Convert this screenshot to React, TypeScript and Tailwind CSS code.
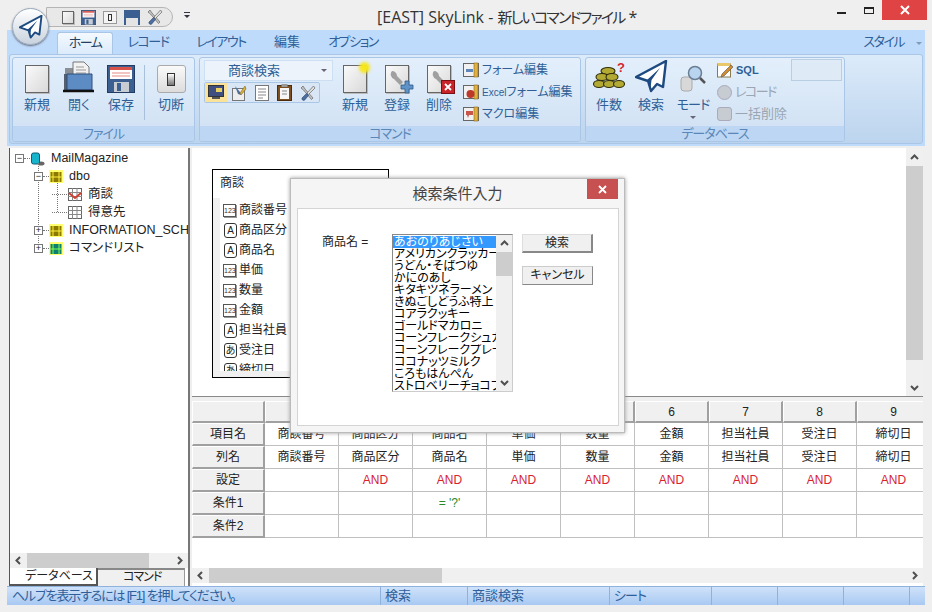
import React from "react";

const jp = '"Liberation Sans", "Noto Sans CJK JP", sans-serif';

function Plane({ size, sw = 2.4 }: { size: number; sw?: number }) {
  return (
    <svg width={size} height={size} viewBox="0 0 33 33">
      <path d="M31 1 L1 17 L13 21 L16 31 L22 24 L28 27 Z" fill="#fff" stroke="#1d4a80" strokeWidth={sw} strokeLinejoin="round" />
      <path d="M25 8 L12 20 L15.5 28 L16.5 20 Z" fill="#1d4a80" />
    </svg>
  );
}

function Chevron({ dir }: { dir: "up" | "down" | "left" | "right" }) {
  const d = {
    up: "M1 6 L4.500 2.500 L8 6",
    down: "M1 3 L4.500 6.500 L8 3",
    left: "M6 1 L2.500 4.500 L6 8",
    right: "M3 1 L6.500 4.500 L3 8",
  }[dir];
  return (
    <svg width="9" height="9" viewBox="0 0 9 9" className="shrink-0">
      <path d={d} fill="none" stroke="#505050" strokeWidth="2" />
    </svg>
  );
}

function BlankDoc({ w = 24, h = 28 }: { w?: number; h?: number }) {
  return (
    <div
      className="border border-[#666] bg-gradient-to-br from-[#fafafa] to-[#d9d9d9] shadow-[1px_1px_0_#bbb] shrink-0"
      style={{ width: w, height: h }}
    />
  );
}

function Floppy({ size = 28 }: { size?: number }) {
  return (
    <svg width={size} height={size} viewBox="0 0 28 28">
      <rect x="0.500" y="0.500" width="27" height="27" fill="#3c5f92" stroke="#243c63" />
      <rect x="3" y="2" width="22" height="12" fill="#fff" />
      <rect x="3" y="2" width="22" height="3" fill="#d9534a" />
      <path d="M5 8h18M5 11h18" stroke="#e28b85" />
      <rect x="7" y="17" width="15" height="10" fill="#c8cdd4" />
      <rect x="10" y="18" width="4" height="8" fill="#3c5f92" />
    </svg>
  );
}

function OpenFolder() {
  return (
    <svg width="32" height="32" viewBox="0 0 32 32">
      <path d="M2 7h10V3h10l4 4v10H2z" fill="#8a8f96" />
      <path d="M10 1h11l5 5v12H10z" fill="#f2f2f2" stroke="#777" />
      <path d="M13 6h8M13 9h10M13 12h10" stroke="#999" />
      <path d="M1 13h3v16h-3z" fill="#55606e" />
      <path d="M4 13h25v16H4z" fill="#5d8cc4" stroke="#2d4f7c" />
      <path d="M0 30h31" stroke="#111" strokeWidth="2.400" />
    </svg>
  );
}

function Switch({ size = 29 }: { size?: number }) {
  return (
    <div className="rounded-[3px] border border-[#aaa] bg-gradient-to-b from-[#fafafa] to-[#dcdcdc] flex items-center justify-center shrink-0" style={{ width: size, height: size - 1 }}>
      <div className="w-[8px] h-[13px] border border-[#333] bg-gradient-to-b from-[#fff] to-[#777]" />
    </div>
  );
}

function Tools({ size = 16 }: { size?: number }) {
  return (
    <svg width={size} height={size} viewBox="0 0 16 16">
      <path d="M3 1l2 3 8 9-1.500 1.500L3.500 5 1 3z" fill="#c4c4c4" stroke="#666" strokeWidth="0.700" />
      <path d="M13.500 1L7 8l1.500 1.500L15 3z" fill="#ddd" stroke="#666" strokeWidth="0.700" />
      <path d="M6.500 8.500L2 13a1.800 1.800 0 0 0 2.500 2.200l4-4.700z" fill="#4c6f9f" stroke="#2c4568" strokeWidth="0.600" />
    </svg>
  );
}

function Coins() {
  return (
    <svg width="32" height="29" viewBox="0 0 32 29" className="mb-[2px]">
      <g fill="#b3aa34" stroke="#2f2c0a" strokeWidth="1.100">
        <ellipse cx="15" cy="9" rx="7" ry="3.500" />
        <ellipse cx="9" cy="15" rx="6" ry="3.500" />
        <ellipse cx="19" cy="15" rx="6" ry="3.500" />
        <ellipse cx="6" cy="22" rx="5.500" ry="3.500" />
        <ellipse cx="16" cy="22" rx="5.500" ry="3.500" />
        <ellipse cx="26" cy="22" rx="5.500" ry="3.500" />
      </g>
      <text x="24" y="10" fontSize="13" fontWeight="700" fill="#d7262c" fontFamily="Liberation Sans">?</text>
    </svg>
  );
}

function SmallSheet({ tone }: { tone: "blue" | "red" | "photo" }) {
  return (
    <svg width="16" height="16" viewBox="0 0 16 16" className="shrink-0">
      <rect x="0.500" y="1.500" width="15" height="13" fill="#f1f1f1" stroke="#666" />
      <rect x="11" y="1" width="4" height="14" fill="#e0b040" stroke="#8a6a1c" strokeWidth="0.600" />
      {tone === "blue" && <rect x="3" y="7" width="7" height="3" fill="#5d86bb" />}
      {tone === "red" && <circle cx="7.500" cy="10" r="4" fill="#bd3a2a" />}
      {tone === "photo" && <path d="M3 5h7v4H6l-1 3-1-3H3z" fill="#c9564a" />}
    </svg>
  );
}

function WrenchDoc({ badge }: { badge: "add" | "del" }) {
  return (
    <div className="relative">
      <BlankDoc />
      <svg width="16" height="16" viewBox="0 0 16 16" className="absolute left-[4px] top-[5px]">
        <path d="M3 1a5 5 0 0 0 2 8l6 6 3-3-6-6a5 5 0 0 0-5-5z" fill="#a0a0a0" />
      </svg>
      {badge === "add" ? (
        <svg width="14" height="14" viewBox="0 0 14 14" className="absolute -right-[5px] -bottom-[1px]">
          <path d="M5 1h4v4h4v4H9v4H5V9H1V5h4z" fill="#5f92c6" stroke="#2d5a8c" strokeWidth="0.800" />
        </svg>
      ) : (
        <div className="absolute -right-[4px] -bottom-[1px] w-[14px] h-[14px] bg-[#c9232a] border border-[#7a1015] flex items-center justify-center">
          <svg width="8" height="8" viewBox="0 0 8 8"><path d="M1 1l6 6M7 1L1 7" stroke="#fff" strokeWidth="1.800" /></svg>
        </div>
      )}
    </div>
  );
}

function RibbonBtn({ label, icon, w, ml = 0 }: { label: string; icon: React.ReactNode; w: number; ml?: number }) {
  return (
    <div className="flex flex-col items-center shrink-0" style={{ width: w, marginLeft: ml }}>
      <div className="h-[35px] flex items-end justify-center">{icon}</div>
      <div className="mt-[4px] text-[13px] leading-[16px] text-[#2f5f96] whitespace-nowrap">{label}</div>
    </div>
  );
}

function Group({ title, width, ml, children }: { title: string; width: number; ml: number; children: React.ReactNode }) {
  return (
    <div className="shrink-0 h-[85px] rounded-[3px] border border-[#a9c6e6] flex flex-col overflow-hidden bg-gradient-to-b from-[#e3effb] to-[#cfe0f3]" style={{ width, marginLeft: ml }}>
      <div className="h-[68px] relative flex">{children}</div>
      <div className="flex-1 bg-[#bcd6f3] text-center text-[13px] leading-[15px] tracking-[-1px] text-[#5b87b8]">{title}</div>
    </div>
  );
}

const tree = [
  { text: "MailMagazine", indent: 0, box: "-", icon: "db" },
  { text: "dbo", indent: 19, box: "-", icon: "schema" },
  { text: "商談", indent: 38, box: "", icon: "view" },
  { text: "得意先", indent: 38, box: "", icon: "table" },
  { text: "INFORMATION_SCHEMA", indent: 19, box: "+", icon: "schema" },
  { text: "コマンドリスト", indent: 19, box: "+", icon: "green" },
];

function TreeIcon({ kind }: { kind: string }) {
  if (kind === "db") {
    return (
      <svg width="15" height="15" viewBox="0 0 15 15" className="shrink-0">
        <ellipse cx="11" cy="12.500" rx="3.500" ry="2" fill="#666" />
        <rect x="1.500" y="2" width="8" height="11" rx="2" fill="#18b4cc" stroke="#0b5f76" />
      </svg>
    );
  }
  if (kind === "view" || kind === "table") {
    return (
      <svg width="14" height="13" viewBox="0 0 14 13" className="shrink-0">
        <rect x="0.500" y="0.500" width="13" height="12" fill="#fff" stroke="#666" />
        <path d="M0 4.500h14M0 8.500h14M4.500 0v13M9 0v13" stroke="#888" />
        {kind === "view" && <path d="M1 5l6 5 6-5" fill="none" stroke="#d04030" strokeWidth="2" />}
      </svg>
    );
  }
  const bg = kind === "green" ? "#0f7f6f" : "#8c7a00";
  return (
    <svg width="14" height="13" viewBox="0 0 14 13" className="shrink-0">
      <rect x="0" y="0" width="14" height="13" fill="#ffff70" />
      <rect x="1.500" y="2" width="11" height="10" fill={bg} />
      <path d="M4 2v10M10 2v10M1.500 7h11" stroke={kind === "green" ? "#7fff50" : "#fff040"} />
    </svg>
  );
}

function FieldIcon({ kind }: { kind: string }) {
  if (kind === "123") {
    return (
      <div className="w-[13px] h-[13px] mr-[2px] border border-[#555] bg-white text-[7px] leading-[11px] text-center text-[#333] shadow-[1px_1px_0_#999] shrink-0">
        123
      </div>
    );
  }
  return (
    <div className="w-[13px] h-[15px] mx-[1px] rounded-[3px] border border-[#333] bg-white text-[10px] leading-[13px] text-center text-[#222] shrink-0">
      {kind}
    </div>
  );
}

const fields = [
  ["123", "商談番号"], ["A", "商品区分"], ["A", "商品名"], ["123", "単価"], ["123", "数量"],
  ["123", "金額"], ["A", "担当社員"], ["あ", "受注日"], ["あ", "締切日"],
];

const columns = ["商談番号", "商品区分", "商品名", "単価", "数量", "金額", "担当社員", "受注日", "締切日"];

const products = [
  "あおのりあじさい", "アメリカンクラッカー", "うどん・そばつゆ", "かにのあし", "キタキツネラーメン", "きぬごしどうふ特上",
  "コアラクッキー", "ゴールドマカロニ", "コーンフレークシュガー", "コーンフレークプレーン", "ココナッツミルク", "ころもはんぺん", "ストロベリーチョコブ",
];

function HeadCell({ children }: { children?: React.ReactNode }) {
  return (
    <div className="bg-[#f0f0f0] border-r-2 border-b-2 border-[#a0a0a0] border-t border-l border-t-white border-l-white flex items-center justify-center text-[12px] text-[#222]">
      {children}
    </div>
  );
}

function Cell({ children, color = "text-[#222]" }: { children?: React.ReactNode; color?: string }) {
  return <div className={`border-r border-b border-[#c0c0c0] flex items-center justify-center text-[12px] ${color}`}>{children}</div>;
}

function ScrollH({ thumbW }: { thumbW: number }) {
  return (
    <div className="h-[15px] flex items-center bg-[#f0f0f0] shrink-0">
      <div className="w-[17px] flex justify-center"><Chevron dir="left" /></div>
      <div className="h-full bg-[#cdcdcd]" style={{ width: thumbW }} />
      <div className="ml-auto w-[17px] flex justify-center"><Chevron dir="right" /></div>
    </div>
  );
}

export default function App() {
  return (
    <div className='relative w-[932px] h-[612px] overflow-hidden bg-[#efefef] flex flex-col [font-feature-settings:"palt"]' style={{ fontFamily: jp }}>
      {/* title bar */}
      <div className="h-[30px] shrink-0 flex items-start relative">
        <div className="absolute left-[377px] top-[7px] text-[16px] leading-[20px] text-[#333] whitespace-nowrap" style={{ fontFamily: '"Open Sans", "Noto Sans CJK JP", sans-serif' }}>
          [EAST] SkyLink - <span className="text-[15px] tracking-[-1.8px]">新しいコマンドファイル</span> *
        </div>
        <div className="absolute left-[46px] top-[7px] w-[127px] h-[20px] rounded-r-full border border-[#b5b5b5] bg-[#e8e8e8] flex items-center pl-[15px] gap-[7px]">
          <BlankDoc w={12} h={13} />
          <Floppy size={15} />
          <div className="w-[14px] h-[13px] border border-[#999] bg-[#f4f4f4] flex items-center justify-center"><div className="w-[4px] h-[7px] border border-[#333]" /></div>
          <div className="w-[16px] h-[15px] bg-[#3c5f92] flex items-end justify-center"><div className="w-[12px] h-[7px] bg-[#e4e4e4]" /></div>
          <Tools size={16} />
        </div>
        <div className="absolute left-[183px] top-[12px] w-[7px] flex flex-col items-center">
          <div className="w-[6px] h-[1px] bg-[#334]" />
          <div className="mt-[2px] w-0 h-0 border-x-[3px] border-t-[3px] border-x-transparent border-t-[#334]" />
        </div>
        <div className="ml-auto flex items-start mr-[5px]">
          <div className="w-[9px] h-[2px] bg-[#222] mt-[12px] mr-[18px]" />
          <div className="w-[10px] h-[7px] border border-[#222] border-t-2 mt-[7px] mr-[8px]" />
          <div className="w-[45px] h-[20px] bg-[#e04343] flex items-center justify-center">
            <svg width="10" height="10" viewBox="0 0 10 10"><path d="M1 1l8 8M9 1L1 9" stroke="#fff" strokeWidth="2" /></svg>
          </div>
        </div>
      </div>

      {/* ribbon */}
      <div className="mx-[7px] h-[116px] shrink-0 bg-[#bfdbfb] flex flex-col">
        <div className="h-[24px] shrink-0 flex items-end text-[13px] text-[#2f5f96] pl-[50px]">
          <div className="w-[56px] h-[22px] bg-gradient-to-b from-[#f4f9ff] to-[#dcebfa] border border-b-0 border-[#a9c6e6] rounded-t-[3px] text-center leading-[20px] tracking-[-1.5px] text-[#223e60]">ホーム</div>
          <div className="ml-[5px] w-[60px] text-center h-[22px] leading-[20px] tracking-[-1.5px]">レコード</div>
          <div className="ml-[13px] w-[60px] text-center h-[22px] leading-[20px] tracking-[-1.5px]">レイアウト</div>
          <div className="ml-[16px] w-[40px] text-center h-[22px] leading-[20px]">編集</div>
          <div className="ml-[16px] w-[60px] text-center h-[22px] leading-[20px] tracking-[-1.5px]">オプション</div>
          <div className="ml-auto h-[22px] leading-[20px] tracking-[-1.5px]">スタイル</div>
          <div className="ml-[12px] mr-[3px] mb-[9px] w-0 h-0 border-x-[3px] border-t-[3px] border-x-transparent border-t-[#7f9cbc]" />
        </div>
        <div className="h-[90px] mx-[2px] shrink-0 rounded-[3px] border border-[#a9c6e6] bg-gradient-to-b from-[#dcebfa] to-[#bcd4ee] flex items-start pt-[2px]">
          <Group title="ファイル" width={183} ml={2}>
            <RibbonBtn label="新規" w={38} ml={5} icon={<BlankDoc />} />
            <RibbonBtn label="開く" w={38} ml={4} icon={<OpenFolder />} />
            <RibbonBtn label="保存" w={38} ml={4} icon={<Floppy />} />
            <div className="w-px h-[55px] bg-[#a9c0da] ml-[4px] mt-[7px]" />
            <RibbonBtn label="切断" w={36} ml={8} icon={<Switch />} />
          </Group>
          <Group title="コマンド" width={382} ml={4}>
            <div className="flex flex-col w-[130px] shrink-0 ml-[4px] mt-[2px]">
              <div className="h-[21px] w-[129px] bg-[#ecf3fb] border border-[#cddff2] flex items-center relative text-[13px] text-[#2f5f96] pl-[23px]">
                商談検索
                <div className="absolute right-[5px] top-[8px] w-0 h-0 border-x-[3px] border-t-[3px] border-x-transparent border-t-[#667]" />
              </div>
              <div className="mt-px h-[21px] w-[116px] border border-[#a9c6e6] rounded-[2px] bg-[#d9e6f5] flex items-center">
                <div className="w-[22px] h-full bg-[#fbe29a] flex items-center justify-center">
                  <svg width="16" height="15" viewBox="0 0 16 15">
                    <rect x="0.500" y="0.500" width="15" height="11" fill="#3f4f7f" stroke="#333" />
                    <rect x="8" y="3" width="6" height="4" fill="#e8d060" />
                    <path d="M4 13h8" stroke="#555" strokeWidth="2" />
                  </svg>
                </div>
                <div className="w-[23px] flex justify-center">
                  <svg width="16" height="16" viewBox="0 0 16 16">
                    <rect x="1.500" y="3.500" width="12" height="12" fill="#eee" stroke="#777" />
                    <path d="M4 1l5 6 1 3-3-1z" fill="#4c6f9f" />
                    <path d="M14 1l-5 7 1 2 5-6z" fill="#d8b23a" stroke="#6a5518" strokeWidth="0.500" />
                  </svg>
                </div>
                <div className="w-[23px] flex justify-center">
                  <svg width="14" height="16" viewBox="0 0 14 16">
                    <rect x="0.500" y="0.500" width="13" height="15" fill="#fff" stroke="#777" />
                    <path d="M3 4h8M3 7h8M3 10h8M3 13h5" stroke="#888" />
                  </svg>
                </div>
                <div className="w-[23px] flex justify-center">
                  <svg width="15" height="17" viewBox="0 0 15 17">
                    <rect x="0.500" y="1.500" width="14" height="15" fill="#7d4f1e" stroke="#4a2c0e" />
                    <rect x="3" y="4" width="9" height="11" fill="#f6f6f6" />
                    <rect x="4.500" y="0" width="6" height="3" fill="#999" />
                    <path d="M5 7h5M5 10h5" stroke="#888" />
                  </svg>
                </div>
                <div className="w-[23px] flex justify-center"><Tools /></div>
              </div>
            </div>
            <div className="relative ml-[2px]">
              <RibbonBtn label="新規" w={38} icon={<BlankDoc />} />
              <div className="absolute left-[23px] top-[4px] w-[11px] h-[11px] rounded-full bg-[#f6e71c] blur-[1.5px]" />
            </div>
            <RibbonBtn label="登録" w={38} ml={4} icon={<WrenchDoc badge="add" />} />
            <RibbonBtn label="削除" w={38} ml={4} icon={<WrenchDoc badge="del" />} />
            <div className="flex flex-col ml-[5px] mt-[1px] text-[12px] text-[#2f5f96]">
              <div className="h-[22px] flex items-center gap-[3px] whitespace-nowrap"><SmallSheet tone="blue" />フォーム編集</div>
              <div className="h-[22px] flex items-center gap-[3px] whitespace-nowrap"><SmallSheet tone="red" /><span><span className="text-[10px]">Excel</span>フォーム編集</span></div>
              <div className="h-[22px] flex items-center gap-[3px] whitespace-nowrap"><SmallSheet tone="photo" />マクロ編集</div>
            </div>
          </Group>
          <Group title="データベース" width={260} ml={4}>
            <RibbonBtn label="件数" w={38} ml={4} icon={<Coins />} />
            <RibbonBtn label="検索" w={38} ml={4} icon={<Plane size={33} />} />
            <div className="flex flex-col items-center w-[38px] ml-[4px] shrink-0">
              <div className="h-[35px] flex items-end justify-center">
                <svg width="26" height="28" viewBox="0 0 26 28">
                  <rect x="1" y="12" width="11" height="14" rx="3" fill="#d8d8d8" stroke="#aaa" />
                  <circle cx="15" cy="8" r="6.500" fill="#b8d4ee" stroke="#6b7f94" strokeWidth="1.500" />
                  <path d="M20 13l5 5" stroke="#555" strokeWidth="2.500" />
                </svg>
              </div>
              <div className="mt-[4px] text-[13px] leading-[16px] tracking-[-1px] text-[#2f5f96] whitespace-nowrap">モード</div>
              <div className="mt-[3px] w-0 h-0 border-x-[3px] border-t-[3px] border-x-transparent border-t-[#667]" />
            </div>
            <div className="flex flex-col ml-[5px] mt-[1px] text-[13px] text-[#9aa6b3] shrink-0">
              <div className="h-[22px] flex items-center gap-[3px] text-[#2f5f96] text-[11px] font-bold">
                <svg width="16" height="16" viewBox="0 0 16 16">
                  <rect x="0.500" y="2" width="13" height="13" fill="#fff" stroke="#8a7a4a" />
                  <rect x="0.500" y="1" width="13" height="3" fill="#e8c86a" />
                  <path d="M5 12l9-9 2 2-9 9-3 1z" fill="#d08a30" stroke="#555" strokeWidth="0.600" />
                </svg>
                SQL
              </div>
              <div className="h-[22px] flex items-center gap-[3px]"><div className="w-[15px] h-[15px] rounded-full bg-[#c6ccd2] border border-[#aab]" /><span className="tracking-[-1.5px]">レコード</span></div>
              <div className="h-[22px] flex items-center gap-[3px]"><div className="w-[15px] h-[14px] rounded-[3px] bg-[#c6ccd2] border border-[#aab]" />一括削除</div>
            </div>
            <div className="absolute right-[2px] top-[1px] w-[51px] h-[22px] border border-[#b9cde3] bg-[#dfeaf7]" />
          </Group>
        </div>
      </div>

      {/* main area */}
      <div className="h-[438px] mt-[2px] mx-[9px] shrink-0 flex">
        <div className="w-[181px] shrink-0 border-l border-[#555] border-r-2 border-r-[#777] bg-white flex flex-col overflow-hidden">
          <div className="flex-1 pt-[1px] overflow-hidden text-[12.5px] text-[#222] relative">
            <div className="absolute left-[28px] top-[15px] h-[82px] border-l border-dotted border-[#777]" />
            <div className="absolute left-[47px] top-[33px] h-[31px] border-l border-dotted border-[#777]" />
            {tree.map((row) => (
              <div key={row.text} className="h-[18px] flex items-center whitespace-nowrap" style={{ paddingLeft: row.indent + 5 }}>
                {row.box ? (
                  <>
                    <div className="w-[9px] h-[9px] border border-[#777] bg-white text-[9px] leading-[6px] text-center shrink-0 relative z-10">{row.box === "-" ? "−" : "+"}</div>
                    <div className="w-[6px] border-t border-dotted border-[#777] shrink-0" />
                  </>
                ) : (
                  <div className="w-[15px] border-t border-dotted border-[#777] shrink-0 mr-px -ml-[1px]" />
                )}
                <TreeIcon kind={row.icon} />
                <span className="ml-[6px]">{row.text}</span>
              </div>
            ))}
          </div>
          <ScrollH thumbW={122} />
          <div className="h-[18px] flex text-[12px] text-[#222] shrink-0">
            <div className="w-[88px] bg-white border-b-2 border-[#555] border-r-2 border-r-[#555] pl-[15px] leading-[16px]">データベース</div>
            <div className="w-[87px] bg-[#f0f0f0] border-t-2 border-[#888] border-r border-r-[#999] pl-[25px] tracking-[-1px] leading-[15px]">コマンド</div>
          </div>
        </div>
        <div className="w-[2px] shrink-0" />
        <div className="flex-1 min-w-0 flex flex-col">
          <div className="h-[248px] shrink-0 bg-white relative flex justify-end">
            <div className="absolute left-[20px] top-[21px] w-[177px] h-[209px] border border-black bg-[#f0f0f0] overflow-hidden">
              <div className="h-[28px] bg-white pl-[7px] text-[12px] leading-[26px] text-[#222]">商談</div>
              <div className="ml-[7px] mr-[8px] h-[173px] bg-white overflow-hidden pt-[2px]">
                {fields.map(([kind, name]) => (
                  <div key={name} className="h-[20px] flex items-center gap-[1px] text-[12px] text-[#222] pl-[3px] whitespace-nowrap">
                    <FieldIcon kind={kind} />
                    {name}
                  </div>
                ))}
              </div>
            </div>
            <div className="w-[17px] bg-[#f0f0f0] flex flex-col items-center">
              <div className="h-[18px] flex items-center"><Chevron dir="up" /></div>
              <div className="w-full h-[194px] bg-[#cdcdcd]" />
              <div className="mt-auto h-[18px] flex items-center"><Chevron dir="down" /></div>
            </div>
          </div>
          <div className="h-[5px] shrink-0 bg-[#efefef] border-t border-[#888]" />
          <div className="flex-1 min-h-0 bg-white overflow-hidden">
            <div className="grid grid-cols-[73px_repeat(9,74px)] grid-rows-[22px_repeat(5,23px)]">
              <HeadCell />
              {[1, 2, 3, 4, 5, 6, 7, 8, 9].map((n) => <HeadCell key={n}>{n}</HeadCell>)}
              <HeadCell>項目名</HeadCell>
              {columns.map((c) => <Cell key={c}>{c}</Cell>)}
              <HeadCell>列名</HeadCell>
              {columns.map((c) => <Cell key={c}>{c}</Cell>)}
              <HeadCell>設定</HeadCell>
              {columns.map((c, i) => <Cell key={c} color="text-[#d8232f]">{i > 0 ? "AND" : ""}</Cell>)}
              <HeadCell>条件1</HeadCell>
              {columns.map((c, i) => <Cell key={c} color="text-[#2a8a2a]">{i === 2 ? "= '?'" : ""}</Cell>)}
              <HeadCell>条件2</HeadCell>
              {columns.map((c) => <Cell key={c} />)}
            </div>
          </div>
          <ScrollH thumbW={233} />
          <div className="h-[3px] shrink-0 bg-white" />
        </div>
      </div>

      {/* status bar */}
      <div className="mx-[7px] h-[19px] shrink-0 bg-gradient-to-b from-[#cfe2fa] to-[#a9c9f2] border-t border-[#8fb2dc] flex text-[13px] leading-[17px] text-[#2f5f9a] whitespace-nowrap">
        <div className="w-[374px] pl-[5px] border-r border-[#8fb2dc] tracking-[-1.2px]">ヘルプを表示するには [F1] を押してください。</div>
        <div className="w-[87px] pl-[4px] border-r border-[#8fb2dc]">検索</div>
        <div className="w-[142px] pl-[4px] border-r border-[#8fb2dc]">商談検索</div>
        <div className="w-[102px] pl-[4px] border-r border-[#8fb2dc] tracking-[-1px]">シート</div>
        <div className="w-[66px] border-r border-[#8fb2dc]" />
        <div className="w-[66px] border-r border-[#8fb2dc]" />
        <div className="w-[66px] border-r border-[#8fb2dc]" />
      </div>

      {/* app button */}
      <div className="absolute left-[12px] top-[8px] w-[37px] h-[37px] rounded-full border border-[#9ab] bg-gradient-to-b from-[#ffffff] to-[#c9d3de] flex items-center justify-center shadow-[0_1px_2px_#667]">
        <Plane size={24} sw={2.6} />
      </div>

      {/* dialog */}
      <div className="absolute left-[290px] top-[178px] w-[335px] h-[255px] border border-[#bbb] bg-[#f5f5f5] shadow-[0_0_4px_#999]">
        <div className="h-[29px] flex items-start relative">
          <div className="w-full text-center text-[15px] leading-[30px] text-[#444]">検索条件入力</div>
          <div className="absolute right-[6px] top-0 w-[31px] h-[20px] bg-[#c75050] flex items-center justify-center">
            <svg width="9" height="9" viewBox="0 0 9 9"><path d="M1 1l7 7M8 1L1 8" stroke="#fff" strokeWidth="1.800" /></svg>
          </div>
        </div>
        <div className="ml-[6px] h-[218px] w-[322px] bg-white border border-[#d4d4d4] flex items-start pt-[25px]">
          <div className="ml-[24px] w-[70px] text-[12px] leading-[16px] text-[#222]">商品名 =</div>
          <div className="w-[121px] h-[158px] border border-[#888] border-r-[#ccc] border-b-[#ccc] flex overflow-hidden text-[12px] leading-[12px] text-black">
            <div className="flex-1 min-w-0 overflow-hidden whitespace-nowrap pt-px">
              {products.map((p, i) => (
                <div key={p} className={`h-[12px] pl-[1px] overflow-hidden ${i === 0 ? "bg-[#3399ff] text-white" : ""}`}>{p}</div>
              ))}
            </div>
            <div className="w-[16px] bg-[#f0f0f0] flex flex-col items-center shrink-0">
              <div className="h-[17px] flex items-center"><Chevron dir="up" /></div>
              <div className="w-full h-[24px] bg-[#cdcdcd]" />
              <div className="mt-auto h-[17px] flex items-center"><Chevron dir="down" /></div>
            </div>
          </div>
          <div className="ml-[9px] flex flex-col gap-[13px] text-[12px] text-[#222]">
            <div className="w-[71px] h-[19px] bg-[#f0f0f0] border border-[#888] border-r-2 border-b-2 border-t-[#ddd] border-l-[#ddd] text-center leading-[16px]">検索</div>
            <div className="w-[71px] h-[19px] bg-[#f0f0f0] border border-[#ccc] border-b-[#888] border-r-[#888] text-center leading-[17px]">キャンセル</div>
          </div>
        </div>
      </div>
    </div>
  );
}
